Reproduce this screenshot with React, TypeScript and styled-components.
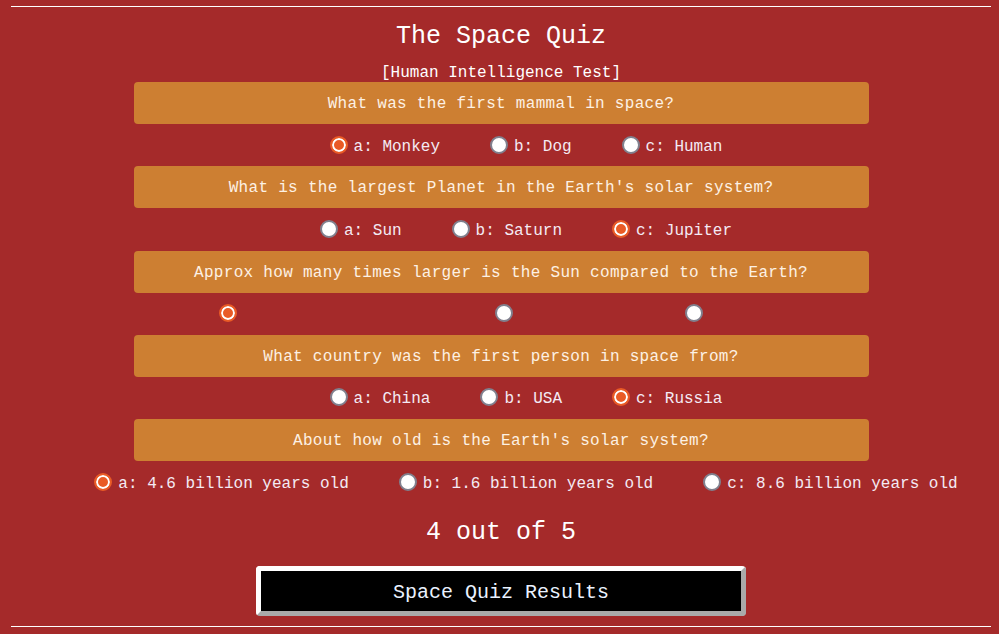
import React from "react";
import styled, { createGlobalStyle } from "styled-components";

const GlobalStyle = createGlobalStyle`
  html, body {
    margin: 0;
    padding: 0;
    background: #a52a2a;
  }
  body {
    font-family: "Liberation Mono", "DejaVu Sans Mono", monospace;
    color: #f6eef6;
  }
`;

const Page = styled.div`
  margin: 6px 8px 0 11px;
  border-top: 1px solid #ffffff;
  border-bottom: 1px solid #ffffff;
  display: flex;
  flex-direction: column;
  align-items: center;
`;

const Title = styled.h1`
  margin: 16px 0 0;
  font-size: 25px;
  line-height: 28px;
  font-weight: normal;
  color: #ffffff;
`;

const Subtitle = styled.p`
  margin: 13px 0 0;
  font-size: 16px;
  line-height: 18px;
  color: #ffffff;
`;

const Question = styled.div`
  width: 735px;
  height: 42px;
  box-sizing: border-box;
  padding-top: 2px;
  background: #cd7f32;
  border-radius: 4px;
  display: flex;
  align-items: center;
  justify-content: center;
  font-size: 16px;
  letter-spacing: 0.3px;
  color: #fdf1e4;
`;

const AnswerRow = styled.div`
  height: 42.25px;
  display: flex;
  align-items: center;
  justify-content: center;
  padding-top: 1px;
  box-sizing: border-box;
  white-space: nowrap;
`;

const Choice = styled.label`
  display: flex;
  align-items: center;
  gap: 6px;
  margin-left: 50px;
  font-size: 16px;
  color: #f4eaf4;
`;

const Radio = styled.input`
  appearance: none;
  -webkit-appearance: none;
  margin: 0;
  width: 18px;
  height: 18px;
  flex: 0 0 18px;
  border-radius: 50%;
  box-sizing: border-box;
  background: #ffffff;
  border: 2px solid #80808e;
  position: relative;
  top: -1px;

  &:checked {
    background: #e95b26;
    border-color: #e95b26;
    box-shadow: inset 0 0 0 2px #ffffff;
  }
`;

const ChoiceText = styled.span<{ $width?: number }>`
  padding-top: 2px;
  ${(p) => (p.$width !== undefined ? `display: inline-block; width: ${p.$width}px;` : "")}
`;

const Score = styled.p`
  margin: 16px 0 0;
  font-size: 25px;
  line-height: 28px;
  color: #ffffff;
`;

const ResultsButton = styled.button`
  margin: 19px 0 10px;
  width: 490px;
  height: 50px;
  box-sizing: border-box;
  padding-top: 3px;
  background: #000000;
  color: #eaf2ff;
  font-family: inherit;
  font-size: 20px;
  border-style: solid;
  border-width: 5px;
  border-color: #ffffff #aaaaaa #aaaaaa #ffffff;
  border-radius: 4px;
  cursor: pointer;
`;

type Option = { text: string; checked?: boolean; width?: number };
type Q = { q: string; options: Option[] };

const questions: Q[] = [
  {
    q: "What was the first mammal in space?",
    options: [{ text: "a: Monkey", checked: true }, { text: "b: Dog" }, { text: "c: Human" }],
  },
  {
    q: "What is the largest Planet in the Earth's solar system?",
    options: [{ text: "a: Sun" }, { text: "b: Saturn" }, { text: "c: Jupiter", checked: true }],
  },
  {
    q: "Approx how many times larger is the Sun compared to the Earth?",
    options: [
      { text: "", checked: true, width: 202 },
      { text: "", width: 116 },
      { text: "", width: 124 },
    ],
  },
  {
    q: "What country was the first person in space from?",
    options: [{ text: "a: China" }, { text: "b: USA" }, { text: "c: Russia", checked: true }],
  },
  {
    q: "About how old is the Earth's solar system?",
    options: [
      { text: "a: 4.6 billion years old", checked: true },
      { text: "b: 1.6 billion years old" },
      { text: "c: 8.6 billion years old" },
    ],
  },
];

export default function App() {
  return (
    <>
      <GlobalStyle />
      <Page>
        <Title>The Space Quiz</Title>
        <Subtitle>[Human Intelligence Test]</Subtitle>
        {questions.map((item, qi) => (
          <React.Fragment key={qi}>
            <Question>{item.q}</Question>
            <AnswerRow>
              {item.options.map((o, oi) => (
                <Choice key={oi}>
                  <Radio type="radio" name={`q${qi}`} defaultChecked={!!o.checked} />
                  <ChoiceText $width={o.width}>{o.text}</ChoiceText>
                </Choice>
              ))}
            </AnswerRow>
          </React.Fragment>
        ))}
        <Score>4 out of 5</Score>
        <ResultsButton>Space Quiz Results</ResultsButton>
      </Page>
    </>
  );
}
